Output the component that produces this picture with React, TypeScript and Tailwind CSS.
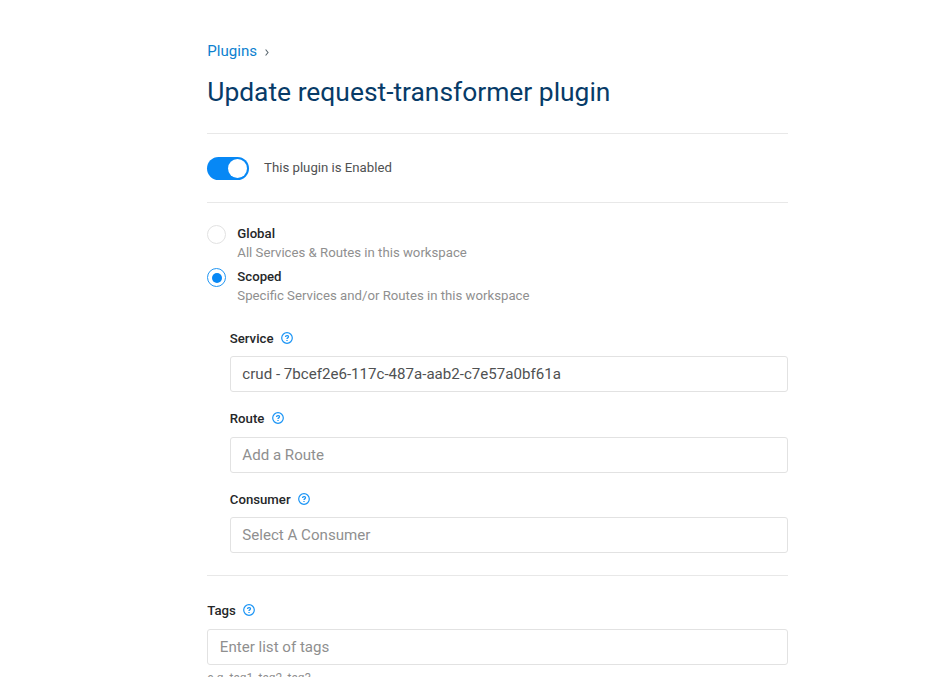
import React from "react";

function HelpIcon() {
  return (
    <svg className="ml-[7.5px] h-[12px] w-[12px] shrink-0 -translate-y-px" viewBox="0 0 12 12" fill="none" stroke="#1a94f5">
      <circle cx="6" cy="6" r="5.3" strokeWidth="1.2" />
      <path d="M4.5 4.9C4.5 3.1 7.5 3.1 7.5 4.8C7.5 5.9 6 5.8 6 7" strokeWidth="1.3" />
      <path d="M6 7.9V9.1" strokeWidth="1.3" />
    </svg>
  );
}

function Field({ label, value, placeholder }: { label: string; value?: string; placeholder?: string }) {
  return (
    <div className="flex flex-col">
      <div className="flex h-[18px] items-center text-[13.2px] font-medium text-[#252729]">
        <span>{label}</span>
        <HelpIcon />
      </div>
      <input
        className="mt-[8.4px] h-[36px] w-full rounded-[3px] border border-[#e2e2e2] bg-white px-[11.5px] text-[15.1px] text-[#4f5152] outline-none placeholder:text-[#8f8f8f]"
        defaultValue={value}
        placeholder={placeholder}
      />
    </div>
  );
}

function Scope({ title, detail, checked }: { title: string; detail: string; checked?: boolean }) {
  return (
    <div className="flex h-[43.4px] items-start text-[13.2px]">
      <span
        className={
          checked
            ? "mt-[1px] flex h-[19px] w-[19px] shrink-0 items-center justify-center rounded-full border-[1.3px] border-[#2196f3]"
            : "mt-[1px] h-[19px] w-[19px] shrink-0 rounded-full border border-[#e2e2e2]"
        }
      >
        {checked && <span className="h-[10px] w-[10px] rounded-full bg-[#0788f5]" />}
      </span>
      <div className="ml-[11px] leading-[19px]">
        <div className="font-medium text-[#252729]">{title}</div>
        <div className="text-[#8f8f8f]">{detail}</div>
      </div>
    </div>
  );
}

export default function App() {
  return (
    <main className="h-[677px] overflow-hidden bg-white pl-[207.3px] font-['Roboto',sans-serif]">
      <div className="flex w-[580.4px] flex-col pt-[41px]">
        <nav className="flex h-[20px] items-center text-[15.1px] text-[#0d81cf]">
          <a>Plugins</a>
          <svg className="ml-[8px] mt-[2px] h-[7px] w-[4px]" viewBox="0 0 4 7" fill="none" stroke="#5b6870">
            <path d="M.6.5L3 3.5L.6 6.5" strokeWidth="1.1" />
          </svg>
        </nav>
        <h1 className="mt-[13px] h-[36px] whitespace-nowrap text-[26.4px] leading-[36px] text-[#073b68]">
          Update request-transformer plugin
        </h1>
        <hr className="mt-[23px] border-[#e8e8e8]" />
        <div className="flex h-[68px] items-center">
          <span className="flex h-[23px] w-[42px] items-center justify-end rounded-full bg-[#0788f5] pr-[2px]">
            <span className="h-[19px] w-[19px] rounded-full bg-white" />
          </span>
          <span className="ml-[14.8px] text-[13.2px] text-[#4f5152]">This plugin is Enabled</span>
        </div>
        <hr className="border-[#e8e8e8]" />
        <div className="mt-[21px] flex flex-col">
          <Scope title="Global" detail="All Services & Routes in this workspace" />
          <Scope title="Scoped" detail="Specific Services and/or Routes in this workspace" checked />
        </div>
        <div className="mt-[19.2px] flex flex-col gap-[17.9px] pl-[22.5px]">
          <Field label="Service" value="crud - 7bcef2e6-117c-487a-aab2-c7e57a0bf61a" />
          <Field label="Route" placeholder="Add a Route" />
          <Field label="Consumer" placeholder="Select A Consumer" />
        </div>
        <hr className="mb-[26px] mt-[22.4px] border-[#e8e8e8]" />
        <Field label="Tags" placeholder="Enter list of tags" />
        <p className="mt-[4px] text-[11.9px] leading-[18px] text-[#8f8f8f]">e.g. tag1, tag2, tag3</p>
      </div>
    </main>
  );
}
